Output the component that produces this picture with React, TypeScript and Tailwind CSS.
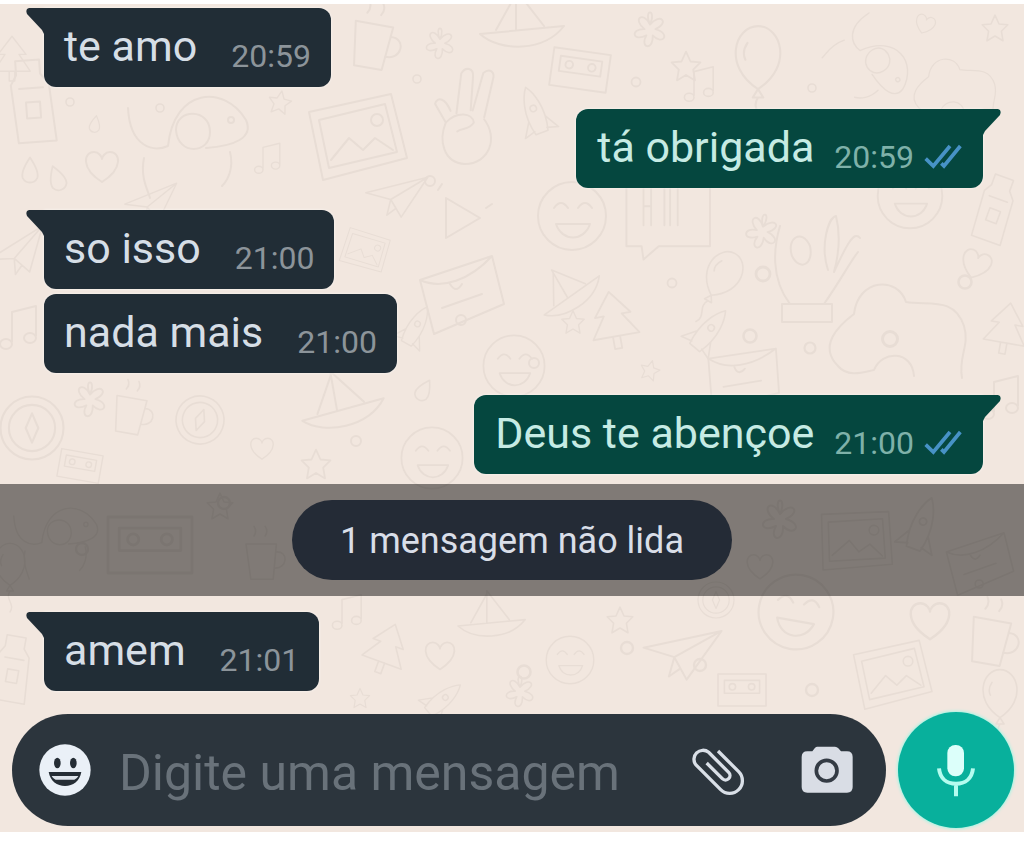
import { useState } from "react";

type Message = {
  id: number;
  text: string;
  time: string;
  sent?: boolean;
  tail?: boolean;
};

const readMessages: Message[] = [
  { id: 1, text: "te amo", time: "20:59", tail: true },
  { id: 2, text: "tá obrigada", time: "20:59", sent: true, tail: true },
  { id: 3, text: "so isso", time: "21:00", tail: true },
  { id: 4, text: "nada mais", time: "21:00" },
  { id: 5, text: "Deus te abençoe", time: "21:00", sent: true, tail: true },
];

const unreadMessages: Message[] = [{ id: 6, text: "amem", time: "21:01", tail: true }];

// Small drawings, each roughly 60 units wide and centred on its own origin.
const motifs: Record<string, string> = {
  heart: "M0 16C-22 2-18-14-8-14C-3-14 0-9 0-7C0-9 3-14 8-14C18-14 22 2 0 16Z",
  star: "M0-16L5-5L16-4L8 4L10 16L0 10L-10 16L-8 4L-16-4L-5-5Z",
  bottle: "M-16-42h24v14l8 10l4 58h-38l-4-58l6-10ZM-14-14h24M-8 0h14v16h-14Z",
  photo: "M-48-24L34-42L50 22L-34 44ZM-38-16L28-32L40 16L-28 32ZM-26 24L-8 2L6 14L18 2L36 14M14-16a6 6 0 1 0 12 0a6 6 0 1 0-12 0",
  elephant: "M-66-20C-64 20-40 24-26 18M-26 18C-20-40 30-44 52-8C60 10 40 18 12 20M-18 2C-18-20 16-20 16 4C16 26-16 28-18 2M-50 30C-54 50-46 62-44 70M36 24C40 40 34 52 28 58M34-8a3 3 0 1 0 6 0a3 3 0 1 0-6 0",
  hand: "M-20 4L-32-14C-30-22-22-20-16-8M-10-6L-8-46C-4-54 4-52 4-44L4-10M6-10L14-48C20-54 26-50 24-42L18-4M18-2C34 16 26 42 2 44C-20 44-26 22-20 4C-10-8 6-8 8 2C4 10-4 8-8 12",
  face: "M-34 0a34 34 0 1 0 68 0a34 34 0 1 0-68 0M-18-8q7-10 14 0M6-8q7-10 14 0M-16 8C-10 26 12 26 18 8Z",
  chat: "M-48-46H40V36H-14L-30 50L-32 36H-48ZM-30-24v38M-22-24v38M-30-6h8M-8-24v38M-2-24v38M6-24v38",
  play: "M-14-20L20 0L-14 20ZM-22-28L-18-34M26-10L32-14",
  note: "M-10 12V-18L14-24V6M-22 14a6 5 0 1 0 12 0a6 5 0 1 0-12 0M2 8a6 5 0 1 0 12 0a6 5 0 1 0-12 0",
  drop: "M0-14C8-2 10 4 8 9A9 9 0 0 1-8 9C-10 4-8-2 0-14Z",
  cake: "M-42-10L30-34L42 14L-28 44ZM-42-10C-20 0 8-10 30-34M-12-6q6 10 12 0M-20 18L20 4M-6 30a5 5 0 1 0 10 0a5 5 0 1 0-10 0",
  balloon: "M0 22C-34 0-22-38 0-38C22-38 34 0 0 22ZM-5 30L0 22L5 30ZM0 30C-8 42 8 48 0 60M-10-22C-14-16-14-10-12-6",
  cloud: "M-60 30C-80 10-60-10-44-22C-40-58 0-60 8-34C30-30 56-40 66-10C72 10 60 20 64 42M-60 30C-50 42-34 36-24 34C-16 14 14 14 16 40",
  plant: "M-24 46h50v18h-50ZM-16 46C-36 20-32-12-26-32M18 46C36 20 44 4 52-6M-14-2C-20-20-4-30 4-12C8 6-6 14-14-2M22 12C14-12 22-40 30-42C34-26 34-8 28 14M28 14C40-12 48-28 54-20",
  gear: "M-30 0a30 30 0 1 0 60 0a30 30 0 1 0-60 0M-22 0a22 22 0 1 0 44 0a22 22 0 1 0-44 0M0-14L6 0L0 14L-6 0Z",
  cup: "M-20-20H18L14 24H-14ZM17-10C34-12 32 12 15 10M-10-30q4-6 0-12M4-30q4-6 0-12",
  tape: "M-30-20h60v40h-60ZM-22-12h44v16h-44ZM-16-4a4 4 0 1 0 8 0a4 4 0 1 0-8 0M8-4a4 4 0 1 0 8 0a4 4 0 1 0-8 0",
  boat: "M-40 10C-20 28 24 28 44 2M-40 10L44 2M-4 6V-34L24 2M-4-30L-24 6",
  flower: "M0-6C-8-24 8-24 0-6C12-20 22-8 6-1C24 4 14 18 3 6C4 24-12 20-4 6C-20 14-22-2-6-1C-20-12-8-22 0-6Z",
  plane: "M-36 6L38-24L12 30L-4 10ZM-4 10L38-24M-4 10L-6 30L4 20",
  tree: "M0-34L20-8H10L26 16H-26L-10-8H-20ZM-4 16v14h8v-14",
  rocket: "M-8 22C-16-8-6-30 0-38C6-30 16-8 8 22ZM-11 4L-22 22L-8 18M11 4L22 22L8 18M-4-10a4 4 0 1 0 8 0a4 4 0 1 0-8 0",
  dot: "M-5 0a5 5 0 1 0 10 0a5 5 0 1 0-10 0",
};

const doodles: [string, number, number, number, number][] = [
  ["bottle", 34, 102, -4, 1], ["heart", 102, 166, 0, 1], ["drop", 30, 170, 0, 0.9], ["drop", 57, 178, -20, 0.9],
  ["elephant", 194, 128, 0, 1], ["photo", 357, 136, 0, 1], ["hand", 466, 120, 4, 1], ["star", 280, 102, 10, 0.7],
  ["drop", 95, 124, 10, 0.6], ["cup", 372, 44, 10, 1], ["flower", 440, 44, 0, 0.8], ["boat", 520, 24, 0, 1],
  ["tape", 580, 70, 8, 0.95], ["flower", 650, 30, 0, 0.9], ["balloon", 758, 66, 0, 1.05], ["star", 686, 66, 0, 0.9],
  ["note", 702, 86, 0, 0.8], ["elephant", 880, 60, 60, 0.7], ["cloud", 955, 90, 0, 0.6], ["star", 995, 28, 0, 0.8],
  ["heart", 925, 24, 20, 0.6], ["rocket", 536, 116, -20, 0.8], ["tree", 12, 60, 0, 0.7], ["note", 270, 160, 0, 0.7],
  ["plane", 395, 192, 8, 0.8], ["face", 572, 216, 0, 1], ["chat", 672, 212, 0, 0.95], ["play", 460, 218, 0, 1],
  ["plant", 806, 258, 0, 1], ["face", 910, 196, 0, 0.95], ["cloud", 898, 336, 0, 1], ["cake", 462, 290, 0, 1],
  ["flower", 762, 232, 10, 0.9], ["boat", 568, 292, -30, 0.8], ["tree", 614, 322, -10, 0.9], ["balloon", 720, 280, 30, 0.8],
  ["rocket", 706, 334, 40, 0.8], ["star", 573, 322, 0, 0.7], ["cake", 744, 374, 10, 0.9], ["face", 514, 366, 0, 0.9],
  ["heart", 976, 264, 20, 0.9], ["bottle", 996, 210, 20, 0.8], ["star", 650, 370, 15, 0.6], ["photo", 365, 250, 30, 0.5],
  ["plane", 16, 250, -10, 0.8], ["note", 22, 330, 0, 1], ["gear", 32, 428, 0, 1.05], ["cup", 130, 414, 10, 0.8],
  ["gear", 200, 420, 20, 0.8], ["boat", 340, 404, -10, 1], ["star", 316, 464, 0, 0.9], ["face", 432, 458, 0, 0.9],
  ["flower", 90, 400, 0, 0.9], ["heart", 262, 448, 0, 0.7], ["tape", 80, 466, 10, 0.7], ["drop", 424, 390, 30, 0.8],
  ["note", 1004, 400, 0, 1], ["tree", 1006, 330, 10, 0.8], ["plane", 150, 200, 0, 0.7], ["rocket", 414, 330, 30, 0.7],
  ["elephant", 60, 530, 0, 0.7], ["tape", 150, 545, 0, 1.4], ["star", 220, 506, 0, 0.8], ["cup", 262, 560, 0, 0.8],
  ["flower", 780, 520, 0, 1], ["photo", 856, 540, 10, 0.8], ["heart", 760, 566, 0, 0.8], ["rocket", 920, 530, 20, 0.9],
  ["cake", 980, 560, 0, 0.8], ["balloon", 10, 570, 0, 0.7], ["heart", 440, 655, 0, 0.9], ["tree", 386, 650, 20, 0.8],
  ["face", 570, 660, 0, 0.7], ["star", 620, 620, 0, 0.8], ["plane", 680, 648, 10, 1], ["gear", 716, 600, 0, 0.6],
  ["face", 796, 612, 10, 1.1], ["photo", 892, 674, 0, 0.8], ["heart", 930, 620, 0, 1.2], ["cup", 990, 640, 10, 1],
  ["note", 350, 614, 0, 0.8], ["boat", 490, 618, 0, 0.8], ["flower", 520, 692, 0, 0.8], ["tape", 742, 690, 0, 0.8],
  ["rocket", 440, 702, 50, 0.7], ["bottle", 14, 670, 10, 0.8], ["balloon", 1000, 700, 0, 0.8], ["star", 360, 698, 0, 0.6],
  ["dot", 70, 102, 0, 0.8], ["dot", 160, 108, 0, 0.8], ["dot", 417, 79, 0, 0.8], ["dot", 430, 181, 0, 1],
  ["dot", 636, 82, 0, 0.9], ["dot", 812, 88, 0, 0.8], ["dot", 672, 283, 0, 0.9], ["dot", 763, 274, 0, 1.4],
  ["dot", 750, 336, 0, 1.3], ["dot", 810, 348, 0, 1.1], ["dot", 890, 339, 0, 1.5], ["dot", 965, 282, 0, 1.3],
  ["dot", 534, 363, 0, 1], ["dot", 356, 441, 0, 1], ["dot", 224, 503, 0, 1.2], ["dot", 82, 549, 0, 1.2],
  ["dot", 627, 648, 0, 1.2], ["dot", 524, 672, 0, 1.3], ["dot", 700, 665, 0, 1.2], ["dot", 812, 690, 0, 1.2],
];

function Wallpaper() {
  return (
    <svg
      aria-hidden="true"
      viewBox="0 0 1024 828"
      preserveAspectRatio="xMidYMin slice"
      className="pointer-events-none absolute inset-0 h-full w-full"
      fill="none"
      stroke="#e8ddd5"
      strokeLinecap="round"
      strokeLinejoin="round"
      strokeWidth="2"
    >
      {doodles.map(([name, x, y, angle, size], i) => (
        <path key={i} d={motifs[name]} transform={`translate(${x} ${y - 4}) rotate(${angle}) scale(${size})`} />
      ))}
    </svg>
  );
}

function ReadTicks() {
  return (
    <svg role="img" aria-label="Lida" viewBox="0 0 114 78" className="h-[26px] w-[38px]" fill="none" stroke="#4792c6" strokeWidth="11">
      <path d="M5 44L28 66L78 6" />
      <path d="M52 58L60 66L109 6" />
    </svg>
  );
}

function Bubble({ text, time, sent, tail }: Message) {
  const side = sent ? "self-end bg-[#05473f]" : "self-start bg-[#212d36]";
  const corner = !tail ? "rounded-xl" : sent ? "rounded-xl rounded-tr-none" : "rounded-xl rounded-tl-none";
  return (
    <li
      className={`relative flex items-end pt-3.5 pb-[15px] shadow-[0_0_3px_#ffffffb0] ${side} ${corner} ${
        sent ? "gap-5 pr-[21px] pl-[21px]" : "gap-[34px] pr-5 pl-5"
      }`}
    >
      {tail && (
        <svg
          aria-hidden="true"
          viewBox="0 0 19 27"
          className={`absolute top-0 h-[27px] w-[19px] ${sent ? "-right-[18px] -scale-x-100" : "-left-[18px]"}`}
          fill={sent ? "#05473f" : "#212d36"}
        >
          <path d="M3 0H19V27L18 26L16 22L1 6Q-1 1 3 0Z" />
        </svg>
      )}
      <p className={`mb-0.5 text-[43px] leading-[48px] ${sent ? "text-[#c6ebe4]" : "text-[#d6dee6]"}`}>{text}</p>
      <div className="flex items-center gap-2.5">
        <time className={`text-[32px] leading-8 ${sent ? "text-[#7fb1a9]" : "text-[#8c949a]"}`}>{time}</time>
        {sent && <ReadTicks />}
      </div>
    </li>
  );
}

function SmileIcon() {
  return (
    <svg aria-hidden="true" viewBox="0 0 156 156" className="size-[52px]">
      <circle cx="78" cy="78" r="77" fill="#eaf0f7" />
      <ellipse cx="55" cy="57" rx="10" ry="16" fill="#252d35" />
      <ellipse cx="103" cy="57" rx="10" ry="16" fill="#252d35" />
      <path d="M29 84H127C122 112 102 126 78 126C54 126 34 112 29 84Z" fill="#252d35" />
      <path d="M38 96H118C115 101 111 105 106 107H50C45 105 41 101 38 96Z" fill="#dfe5ec" />
    </svg>
  );
}

function ClipIcon() {
  return (
    <svg aria-hidden="true" viewBox="0 0 180 159" className="h-[53px] w-[60px]" fill="none" stroke="#d9dfe7" strokeWidth="10">
      <path d="M90 21L152 83A38 38 0 0 1 98 137L24 63A27 27 0 0 1 62 25L122 85A13 13 0 0 1 103 104L56 57" />
    </svg>
  );
}

function CameraIcon() {
  return (
    <svg aria-hidden="true" viewBox="0 0 159 159" className="size-[53px]">
      <path
        d="M48 8H102Q108 8 112 13L120 22H138Q155 22 155 39V129Q155 146 138 146H19Q2 146 2 129V39Q2 22 19 22H34L41 13Q44 8 48 8Z"
        fill="#d9dde5"
      />
      <circle cx="77" cy="80" r="31" fill="none" stroke="#343b44" strokeWidth="11" />
    </svg>
  );
}

function MicIcon() {
  return (
    <svg aria-hidden="true" viewBox="0 0 120 162" className="h-[54px] w-10" fill="none" stroke="#b4fcef" strokeWidth="12">
      <rect x="34" y="6" width="50" height="94" rx="24" fill="#dcfffa" stroke="none" />
      <path d="M9 76C12 106 32 122 60 122C88 122 108 106 111 76M60 122V160" />
    </svg>
  );
}

export default function App() {
  const [draft, setDraft] = useState("");
  return (
    <div className="min-h-screen bg-white pt-1 font-[Roboto,sans-serif]">
      <main className="relative bg-[#f2e7df] pt-1 pb-1">
        <Wallpaper />
        <ul className="relative flex flex-col pr-[41px] pl-11">
          <Bubble {...readMessages[0]} />
          <li aria-hidden="true" className="h-[22px]" />
          <Bubble {...readMessages[1]} />
          <li aria-hidden="true" className="h-[22px]" />
          <Bubble {...readMessages[2]} />
          <li aria-hidden="true" className="h-[5px]" />
          <Bubble {...readMessages[3]} />
          <li aria-hidden="true" className="h-[22px]" />
          <Bubble {...readMessages[4]} />
        </ul>

        <div className="relative mt-2.5 flex justify-center bg-black/47 py-4">
          <p className="rounded-full bg-[#242b36] px-12 pt-[21px] pb-[19px] text-4xl leading-10 text-[#d9dee8]">1 mensagem não lida</p>
        </div>

        <ul className="relative mt-4 flex flex-col pr-[41px] pl-11">
          {unreadMessages.map((message) => (
            <Bubble key={message.id} {...message} />
          ))}
        </ul>

        <form className="relative mt-[21px] flex items-center gap-3 pr-2.5 pl-3" onSubmit={(event) => event.preventDefault()}>
          <div className="flex h-28 min-w-0 flex-1 items-center rounded-full bg-[#2c353d] pr-8 pl-[27px]">
            <button type="button" aria-label="Emojis" className="shrink-0">
              <SmileIcon />
            </button>
            <input
              type="text"
              aria-label="Mensagem"
              placeholder="Digite uma mensagem"
              value={draft}
              onChange={(event) => setDraft(event.target.value)}
              className="ml-7 min-w-0 flex-1 bg-transparent pt-1.5 text-[50px] leading-[60px] text-[#d6dee6] outline-none placeholder:text-[#69727a]"
            />
            <button type="button" aria-label="Anexar" className="shrink-0">
              <ClipIcon />
            </button>
            <button type="button" aria-label="Câmera" className="ml-[53px] shrink-0">
              <CameraIcon />
            </button>
          </div>
          <button
            type="button"
            aria-label="Gravar áudio"
            className="flex size-[116px] shrink-0 items-center justify-center rounded-full bg-[#08b09c] shadow-[0_0_3px_1px_#a5f5e4]"
          >
            <MicIcon />
          </button>
        </form>
      </main>
    </div>
  );
}
